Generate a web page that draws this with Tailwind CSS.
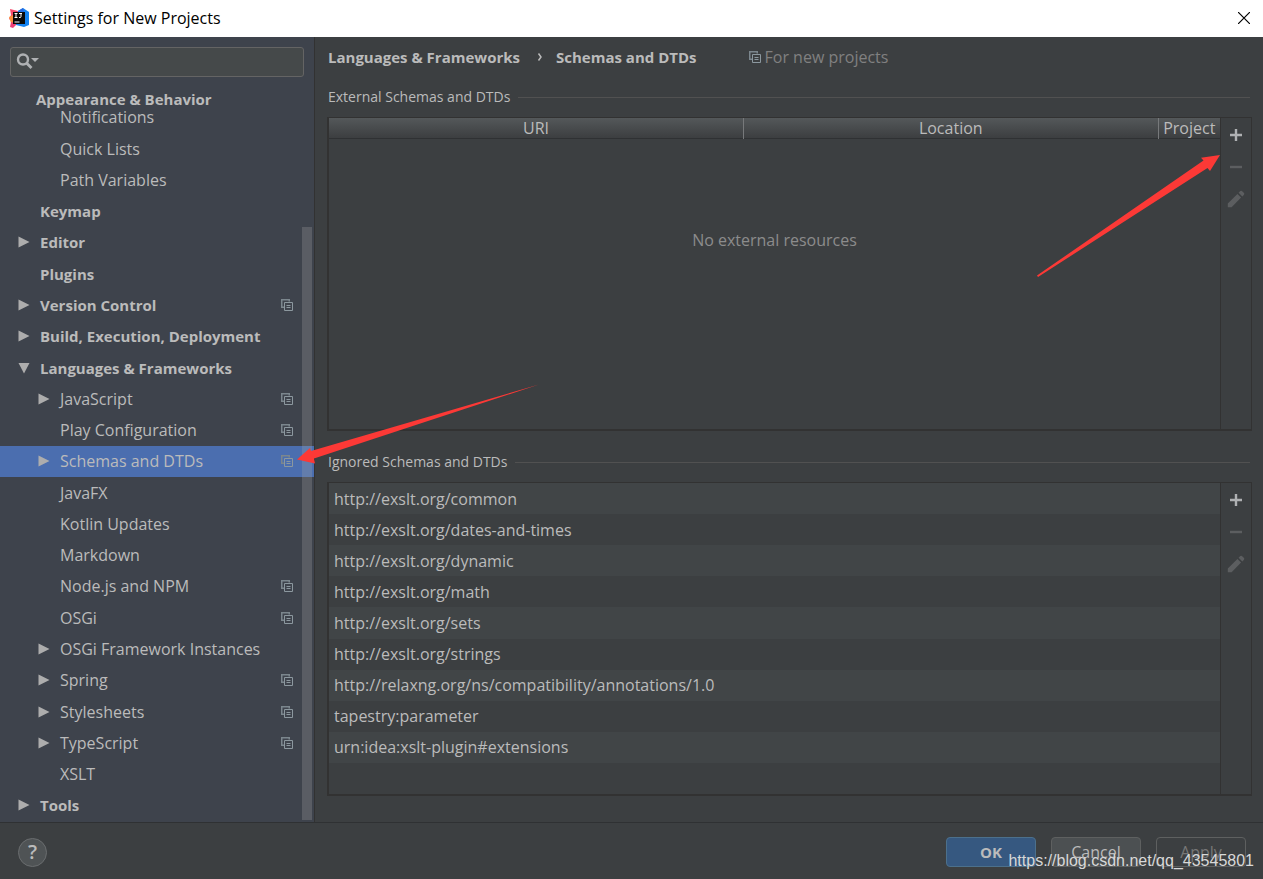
<!DOCTYPE html>
<html lang="en">
<head>
<meta charset="utf-8">
<title>Settings for New Projects</title>
<script src="https://cdn.jsdelivr.net/npm/@tailwindcss/browser@4"></script>
</head>
<body class="h-screen flex flex-col relative overflow-hidden bg-[#3c3f41] text-[#bbbbbb] text-[16px] leading-5 font-['Open_Sans','Noto_Sans',sans-serif]">

<svg class="hidden" aria-hidden="true">
  <symbol id="right" viewBox="0 0 12 12"><path d="M0.5 0.5 11.5 6 0.5 11.5z" fill="#adadad"/></symbol>
  <symbol id="down" viewBox="0 0 12 12"><path d="M0.5 1h11L6 11.5z" fill="#adadad"/></symbol>
  <symbol id="copy" viewBox="0 0 12 12"><path d="M0 0h9v2.500H7.500V1.500h-6v6H3V9H0z" fill="#7b868d"/><path d="M3.500 3.500h8v8h-8zM5.500 6.500h4M5.500 8.500h4" fill="none" stroke="#8c989f"/></symbol>
  <symbol id="plus" viewBox="0 0 14 14"><path d="M7 1v12M1 7h12" stroke="#afb1b3" stroke-width="2.400"/></symbol>
  <symbol id="minus" viewBox="0 0 14 14"><path d="M1 7h12" stroke="#5c5e60" stroke-width="2.400"/></symbol>
  <symbol id="pencil" viewBox="0 0 18 18"><path d="M0.800 17.200V13.400L10.400 3.900 14.100 7.600 4.600 17.200zM11.600 2.700 13.300 1q.8-.6 1.600 0L17 3.100q.6.800 0 1.600L15.300 6.400z" fill="#5c5e60"/></symbol>
</svg>

<header class="h-[37px] shrink-0 flex items-center justify-between bg-white text-black pl-[9px] pr-[11px] pb-0.5">
  <div class="flex items-center gap-[5px]">
    <svg class="size-5" viewBox="0 0 20 20" aria-hidden="true">
      <path d="M1 1l8 2-3 14H2l1-4-3-2 2-4z" fill="#f4486a"/>
      <path d="M0 9l4-2 1 9-3-1z" fill="#f9903c"/>
      <path d="M2 14l6 2-4 4-3-1z" fill="#ee3f77"/>
      <path d="M9 3l5-3 6 4v13l-5 2-8-2z" fill="#1383f2"/>
      <path d="M9 3l5-3 1 4z" fill="#2b66dc"/>
      <path d="M4 4h12v12H4z" fill="#090909"/>
      <path d="M5.500 5.500h3M5.500 9.500h3M7 5.500v4M10 5.500h3M12 5.500v3.200q0 .8-1 .8h-1M5.500 14h5" stroke="#fff" fill="none"/>
    </svg>
    <h1>Settings for New Projects</h1>
  </div>
  <button aria-label="Close" class="size-4 flex items-center justify-center"><svg class="size-3" viewBox="0 0 12 12"><path d="M0 0 12 12M12 0 0 12" stroke="#000" stroke-width="1.200"/></svg></button>
</header>

<div class="flex-1 min-h-0 flex">
  <aside class="w-[315px] shrink-0 relative flex flex-col bg-[#3e434c] border-r border-[#323232]">
    <div class="mt-2.5 ml-2.5 mr-2.5 relative">
      <input type="text" aria-label="Search settings" class="block w-full h-[30px] rounded-[3px] border border-[#646464] bg-[#45494a] pl-9 pr-2 outline-none">
      <svg class="absolute left-1.5 top-1.5 w-6 h-4" viewBox="0 0 24 16" aria-hidden="true"><circle cx="7" cy="6.500" r="5" fill="none" stroke="#afb1b3" stroke-width="2.400"/><path d="M10.500 10 15.500 15" stroke="#afb1b3" stroke-width="2.800"/><path d="M15 5h8l-4 4z" fill="#afb1b3"/></svg>
    </div>
    <h2 class="mt-3 pl-9 text-[15px] leading-5 font-bold">Appearance &amp; Behavior</h2>
    <nav aria-label="Settings" class="flex-1 min-h-0 flex flex-col">
      <a href="#" class="h-6 -mt-0.5 pl-15">Notifications</a>
      <ul class="mt-0.5 pb-px flex-1 grid auto-rows-fr">
        <li><a href="#" class="h-full flex items-center pl-15">Quick Lists</a></li>
        <li><a href="#" class="h-full flex items-center pl-15">Path Variables</a></li>
        <li><a href="#" class="h-full flex items-center pl-10 text-[15px] font-bold">Keymap</a></li>
        <li><a href="#" class="h-full flex items-center pl-[18px] gap-2.5 text-[15px] font-bold"><svg class="size-3"><use href="#right"/></svg>Editor</a></li>
        <li><a href="#" class="h-full flex items-center pl-10 text-[15px] font-bold">Plugins</a></li>
        <li><a href="#" class="h-full flex items-center pl-[18px] pr-[21px] gap-2.5 text-[15px] font-bold"><svg class="size-3"><use href="#right"/></svg>Version Control<svg class="size-3 ml-auto"><use href="#copy"/></svg></a></li>
        <li><a href="#" class="h-full flex items-center pl-[18px] gap-2.5 text-[15px] font-bold"><svg class="size-3"><use href="#right"/></svg>Build, Execution, Deployment</a></li>
        <li><a href="#" class="h-full flex items-center pl-[18px] gap-2.5 text-[15px] font-bold"><svg class="size-3"><use href="#down"/></svg>Languages &amp; Frameworks</a></li>
        <li><a href="#" class="h-full flex items-center pl-[38px] pr-[21px] gap-2.5"><svg class="size-3"><use href="#right"/></svg>JavaScript<svg class="size-3 ml-auto"><use href="#copy"/></svg></a></li>
        <li><a href="#" class="h-full flex items-center pl-15 pr-[21px]">Play Configuration<svg class="size-3 ml-auto"><use href="#copy"/></svg></a></li>
        <li><a href="#" aria-current="page" class="h-full flex items-center pl-[38px] pr-[21px] gap-2.5 bg-[#4b6eaf]"><svg class="size-3"><use href="#right"/></svg>Schemas and DTDs<svg class="size-3 ml-auto"><use href="#copy"/></svg></a></li>
        <li><a href="#" class="h-full flex items-center pl-15">JavaFX</a></li>
        <li><a href="#" class="h-full flex items-center pl-15">Kotlin Updates</a></li>
        <li><a href="#" class="h-full flex items-center pl-15">Markdown</a></li>
        <li><a href="#" class="h-full flex items-center pl-15 pr-[21px]">Node.js and NPM<svg class="size-3 ml-auto"><use href="#copy"/></svg></a></li>
        <li><a href="#" class="h-full flex items-center pl-15 pr-[21px]">OSGi<svg class="size-3 ml-auto"><use href="#copy"/></svg></a></li>
        <li><a href="#" class="h-full flex items-center pl-[38px] gap-2.5"><svg class="size-3"><use href="#right"/></svg>OSGi Framework Instances</a></li>
        <li><a href="#" class="h-full flex items-center pl-[38px] pr-[21px] gap-2.5"><svg class="size-3"><use href="#right"/></svg>Spring<svg class="size-3 ml-auto"><use href="#copy"/></svg></a></li>
        <li><a href="#" class="h-full flex items-center pl-[38px] pr-[21px] gap-2.5"><svg class="size-3"><use href="#right"/></svg>Stylesheets<svg class="size-3 ml-auto"><use href="#copy"/></svg></a></li>
        <li><a href="#" class="h-full flex items-center pl-[38px] pr-[21px] gap-2.5"><svg class="size-3"><use href="#right"/></svg>TypeScript<svg class="size-3 ml-auto"><use href="#copy"/></svg></a></li>
        <li><a href="#" class="h-full flex items-center pl-15">XSLT</a></li>
        <li><a href="#" class="h-full flex items-center pl-[18px] gap-2.5 text-[15px] font-bold"><svg class="size-3"><use href="#right"/></svg>Tools</a></li>
      </ul>
    </nav>
    <div class="absolute right-0.5 top-[190px] bottom-0.5 w-2.5 bg-[#a6a6a6]/27"></div>
  </aside>

  <main class="flex-1 min-w-0 flex flex-col pl-3 pr-[11px] pb-[26px]">
    <div class="h-[42px] shrink-0 flex items-center pl-px pb-0.5 text-[15px] font-bold">
      <span>Languages &amp; Frameworks</span>
      <svg class="size-2 ml-4 mr-3" viewBox="0 0 8 8" aria-hidden="true"><path d="M2.500 0.500 5 4 2.500 7.500" fill="none" stroke="#bbb" stroke-width="1.500"/></svg>
      <span>Schemas and DTDs</span>
      <span class="ml-[52px] flex items-center gap-1 text-[16px] font-normal text-[#808080]"><svg class="size-3"><use href="#copy"/></svg>For new projects</span>
    </div>

    <section class="flex-1 min-h-0 flex flex-col">
      <div class="h-9 mb-0.5 pl-px pr-0.5 shrink-0 flex items-center gap-2 text-[14px]"><h3>External Schemas and DTDs</h3><div class="flex-1 border-t border-[#515151]"></div></div>
      <div class="flex-1 min-h-0 flex border-2 border-t border-r border-[#323232]">
        <div class="flex-1 min-w-0 flex flex-col">
          <table class="w-full table-fixed">
            <thead class="bg-linear-to-b from-[#54585a] to-[#3b3d3f]">
              <tr class="h-5 border-b border-[#2f3133]">
                <th class="p-0 font-normal">URI</th>
                <th class="p-0 font-normal border-l border-[#77797b]">Location</th>
                <th class="p-0 font-normal w-[62px] border-l border-[#77797b]">Project</th>
              </tr>
            </thead>
          </table>
          <div class="flex-1 flex justify-center pt-[91px] text-[#8c8c8c]">No external resources</div>
        </div>
        <div class="w-[31px] shrink-0 flex flex-col items-center gap-4 pt-[9px] border-l border-[#323232]">
          <button aria-label="Add schema" class="size-4 flex items-center justify-center"><svg class="size-3.5"><use href="#plus"/></svg></button>
          <button aria-label="Remove schema" disabled class="size-4 flex items-center justify-center"><svg class="size-3.5"><use href="#minus"/></svg></button>
          <button aria-label="Edit schema" disabled class="size-4 flex items-center justify-center"><svg class="size-[18px] shrink-0"><use href="#pencil"/></svg></button>
        </div>
      </div>
    </section>

    <section class="mt-[13px] flex-1 min-h-0 flex flex-col">
      <div class="h-9 mb-0.5 pl-px pr-0.5 shrink-0 flex items-center gap-2 text-[14px]"><h3>Ignored Schemas and DTDs</h3><div class="flex-1 border-t border-[#515151]"></div></div>
      <div class="flex-1 min-h-0 flex border-2 border-t border-r border-[#323232]">
        <ul class="flex-1 min-w-0 grid grid-rows-10">
          <li class="flex items-center pl-[5px] bg-[#414547]">http://exslt.org/common</li>
          <li class="flex items-center pl-[5px]">http://exslt.org/dates-and-times</li>
          <li class="flex items-center pl-[5px] bg-[#414547]">http://exslt.org/dynamic</li>
          <li class="flex items-center pl-[5px]">http://exslt.org/math</li>
          <li class="flex items-center pl-[5px] bg-[#414547]">http://exslt.org/sets</li>
          <li class="flex items-center pl-[5px]">http://exslt.org/strings</li>
          <li class="flex items-center pl-[5px] bg-[#414547]">http://relaxng.org/ns/compatibility/annotations/1.0</li>
          <li class="flex items-center pl-[5px]">tapestry:parameter</li>
          <li class="flex items-center pl-[5px] bg-[#414547]">urn:idea:xslt-plugin#extensions</li>
        </ul>
        <div class="w-[31px] shrink-0 flex flex-col items-center gap-4 pt-[9px] border-l border-[#323232]">
          <button aria-label="Add ignored" class="size-4 flex items-center justify-center"><svg class="size-3.5"><use href="#plus"/></svg></button>
          <button aria-label="Remove ignored" disabled class="size-4 flex items-center justify-center"><svg class="size-3.5"><use href="#minus"/></svg></button>
          <button aria-label="Edit ignored" disabled class="size-4 flex items-center justify-center"><svg class="size-[18px] shrink-0"><use href="#pencil"/></svg></button>
        </div>
      </div>
    </section>
  </main>
</div>

<footer class="h-[57px] shrink-0 flex items-center justify-between pl-[18px] pr-[17px] pt-0.5 border-t border-[#2f3133]">
  <button aria-label="Help" class="size-[29px] rounded-full border border-[#6a6d6f] bg-[#4f5355] text-xl leading-6 font-semibold">?</button>
  <div class="flex gap-[15px] text-[16px]">
    <button class="w-[90px] h-[30px] rounded-[4px] border border-[#4c708c] bg-[#365880] text-[15px] font-bold">OK</button>
    <button class="w-[90px] h-[30px] rounded-[4px] border border-[#5e6060] bg-[#4c5052]">Cancel</button>
    <button disabled class="w-[90px] h-[30px] rounded-[4px] border border-[#5e6060] text-[#777777]">Apply</button>
  </div>
</footer>

<div class="absolute right-[9px] bottom-1.5 text-base text-[#d8d8d8] font-['Liberation_Sans',sans-serif]">https://blog.csdn.net/qq_43545801</div>

<svg class="absolute left-0 top-0 w-[1263px] h-[879px] pointer-events-none" viewBox="0 0 1263 879" fill="#fc3936" aria-hidden="true">
  <path d="M1220 155 1201 157.700 1203.500 160.500 1037 275.500 1038 277 1207.500 168 1210 171z"/>
  <path d="M297 459.500 310 448 311 451 539 384.500 314 458.500 315 463.500z"/>
</svg>
</body>
</html>
